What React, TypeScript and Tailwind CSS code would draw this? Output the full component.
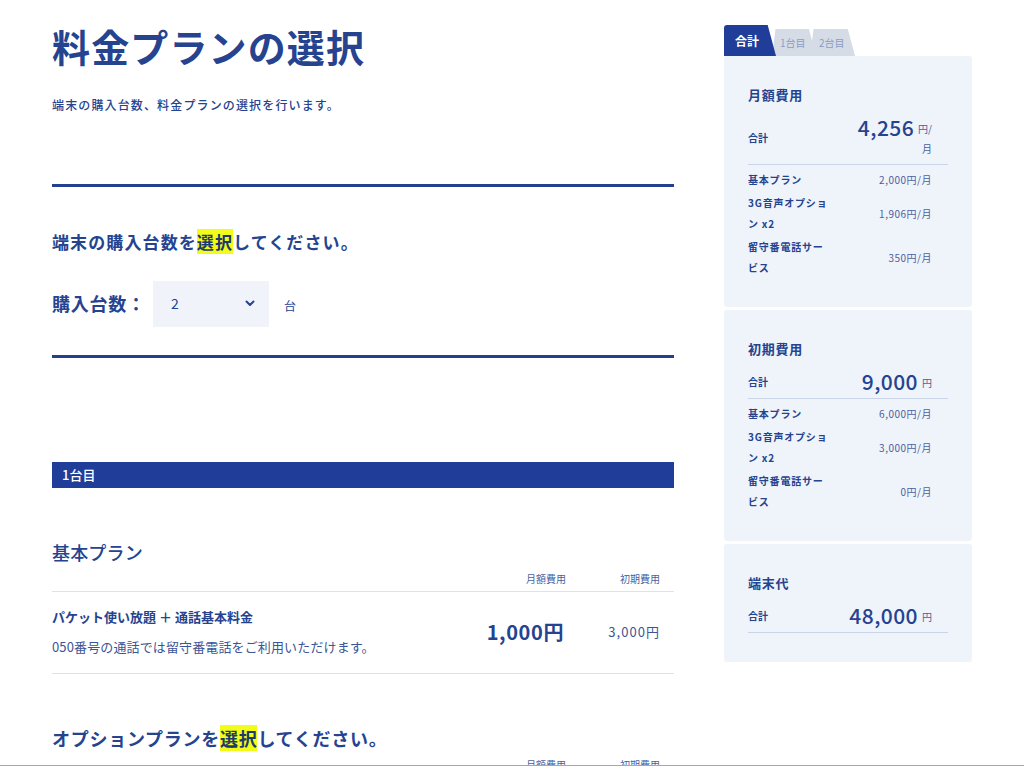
import React from "react"

const font = "font-['Noto_Sans_CJK_JP','Noto_Sans',sans-serif]"

const Mark = ({ children }: { children: React.ReactNode }) => (
  <span className="bg-[#f3fb19] text-[#1d3a6e]">{children}</span>
)

type Row = { label: string; value: string }

const SummaryPanel = ({
  title,
  total,
  unit,
  rows
}: {
  title: string
  total: string
  unit: React.ReactNode
  rows?: Row[]
}) => (
  <div className="rounded-[3px] bg-[#eff3fa] px-6 pt-[29px] pb-[29px]">
    <h3 className="text-[13px] leading-[19px] font-bold tracking-[0.06em] text-[#25438f]">
      {title}
    </h3>
    <div className="mt-[11px] flex items-center justify-between border-b border-[#c9d4e8] pb-[5px] pr-4">
      <span className="text-[10px] font-bold text-[#25438f]">合計</span>
      <div className="flex items-start">
        <span className="text-[21px] leading-[24px] font-medium tracking-[0.02em] text-[#25438f]">
          {total}
        </span>
        <span className="ml-[4px] mt-[4px] text-right text-[10px] leading-[20px] text-[#4a61a0]">
          {unit}
        </span>
      </div>
    </div>
    {rows ? (
      <div className="mt-[4px] flex flex-col gap-[2px] pr-4">
        {rows.map((r) => (
          <div key={r.label} className="flex items-center justify-between">
            <span className="w-[86px] text-[10px] leading-[21px] font-bold tracking-[0.08em] text-[#25438f]">
              {r.label}
            </span>
            <span className="text-[10px] tracking-[0.05em] text-[#4a61a0]">
              {r.value}
            </span>
          </div>
        ))}
      </div>
    ) : null}
  </div>
)

const App = () => {
  return (
    <div className={`${font} min-h-[768px] bg-white text-[#25438f]`}>
      <div className="flex pl-[52px] pt-[22px]">
        {/* main column */}
        <main className="w-[622px]">
          <h1 className="text-[38px] leading-[48px] font-bold tracking-[0.03em] text-[#25438f]">
            料金プランの選択
          </h1>
          <p className="mt-[26px] text-[12px] font-medium tracking-[0.095em] text-[#25438f]">
            端末の購入台数、料金プランの選択を行います。
          </p>

          <hr className="mt-[70px] border-t-[3px] border-[#23408f]" />

          <h2 className="mt-[42px] text-[17px] font-bold tracking-[0.065em]">
            端末の購入台数を<Mark>選択</Mark>してください。
          </h2>
          <div className="mt-[26px] flex items-center">
            <span className="w-[101px] text-[18px] font-bold tracking-[0.04em]">
              購入台数：
            </span>
            <div className="flex h-[46px] w-[116px] items-center justify-between bg-[#f0f4fa] pl-[18px] pr-[14px]">
              <span className="text-[14px] text-[#25438f]">2</span>
              <svg width="10" height="7" viewBox="0 0 10 7" fill="none">
                <path
                  d="M1.5 1.5L5 5L8.5 1.5"
                  stroke="#25438f"
                  strokeWidth="2"
                  strokeLinecap="round"
                  strokeLinejoin="round"
                />
              </svg>
            </div>
            <span className="ml-[15px] mt-[4px] text-[12px]">台</span>
          </div>

          <hr className="mt-[28px] border-t-[3px] border-[#23408f]" />

          <div className="mt-[104px] flex h-[26px] items-center bg-[#1f3d99] px-[10px] text-[13px] font-medium text-white">
            1台目
          </div>

          <h2 className="mt-[51px] text-[18px] font-medium tracking-[0.01em]">
            基本プラン
          </h2>
          <div className="mt-[5px] flex justify-end border-b border-[#dde3ec] pb-[5px] pr-[14px] text-[10px] text-[#4a61a0]">
            <span className="mr-[54px]">月額費用</span>
            <span>初期費用</span>
          </div>
          <div className="flex items-center border-b border-[#dde3ec] pt-[15px] pb-[16px]">
            <div className="flex-1">
              <p className="text-[13px] leading-[20px] font-bold">
                パケット使い放題 ＋ 通話基本料金
              </p>
              <p className="mt-[10px] text-[13px] leading-[20px] tracking-[0.01em] text-[#3c5597]">
                050番号の通話では留守番電話をご利用いただけます。
              </p>
            </div>
            <span className="w-[100px] pr-[16px] text-right text-[20px] font-bold tracking-[0.03em]">
              1,000円
            </span>
            <span className="w-[94px] pr-[14px] text-right text-[13px] tracking-[0.08em] text-[#3c5597]">
              3,000円
            </span>
          </div>

          <h2 className="mt-[51px] text-[18px] font-bold tracking-[0.04em]">
            オプションプランを<Mark>選択</Mark>してください。
          </h2>
          <div className="mt-[5px] flex justify-end pr-[14px] text-[10px] text-[#4a61a0]">
            <span className="mr-[54px]">月額費用</span>
            <span>初期費用</span>
          </div>
        </main>

        {/* summary sidebar */}
        <aside className="ml-[50px] mt-[3px] w-[248px]">
          <div className="flex items-end">
            <div className="z-10 flex h-[31px] w-[52px] items-center rounded-tl-[3px] bg-[#1f3d99] pl-[11px] text-[12px] font-bold text-white [clip-path:polygon(0_0,84%_0,100%_100%,0_100%)]">
              合計
            </div>
            <div className="-ml-[4px] flex h-[27px] w-[44px] items-center bg-[#d6dce6] pl-[8px] text-[10px] text-[#8a9cc4] [clip-path:polygon(8%_0,84%_0,100%_100%,0_100%)]">
              1台目
            </div>
            <div className="-ml-[6px] flex h-[27px] w-[45px] items-center bg-[#d6dce6] pl-[9px] text-[10px] text-[#8a9cc4] [clip-path:polygon(8%_0,84%_0,100%_100%,0_100%)]">
              2台目
            </div>
          </div>
          <div className="flex flex-col gap-[3px]">
            <SummaryPanel
              title="月額費用"
              total="4,256"
              unit={
                <>
                  円/
                  <br />
                  月
                </>
              }
              rows={[
                { label: "基本プラン", value: "2,000円/月" },
                { label: "3G音声オプション x2", value: "1,906円/月" },
                { label: "留守番電話サービス", value: "350円/月" }
              ]}
            />
            <SummaryPanel
              title="初期費用"
              total="9,000"
              unit="円"
              rows={[
                { label: "基本プラン", value: "6,000円/月" },
                { label: "3G音声オプション x2", value: "3,000円/月" },
                { label: "留守番電話サービス", value: "0円/月" }
              ]}
            />
            <SummaryPanel title="端末代" total="48,000" unit="円" />
          </div>
        </aside>
      </div>
      <div className="fixed inset-x-0 bottom-0 h-[3px] border-t border-[#a8a8a8] bg-white" />
    </div>
  )
}

export default App
